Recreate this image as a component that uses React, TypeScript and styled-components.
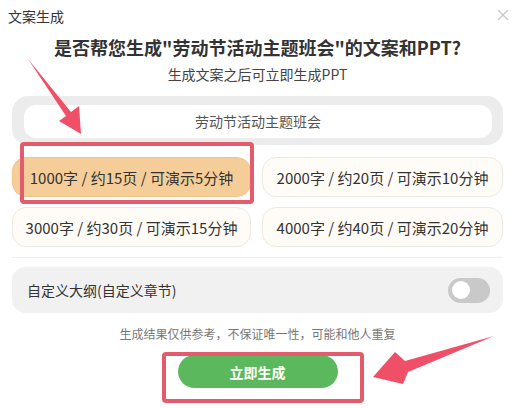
import * as React from 'react';
import styled, { createGlobalStyle } from 'styled-components';

const GlobalStyle = createGlobalStyle`
    html, body {
        margin: 0;
        padding: 0;
        background: #ffffff;
    }
    * {
        box-sizing: border-box;
    }
`;

const Dialog = styled.div`
    position: relative;
    width: 523px;
    height: 408px;
    padding: 0 20px 0 12px;
    background: #ffffff;
    font-family: 'Noto Sans CJK SC', 'Noto Sans', sans-serif;
    color: #333333;
    overflow: hidden;
`;

const Header = styled.div`
    display: flex;
    justify-content: space-between;
    align-items: center;
    height: 32px;
    margin: 0 -7px 0 -4px;
    font-size: 14px;
    color: #333333;
`;

const CloseButton = styled.button`
    width: 14px;
    height: 14px;
    padding: 0;
    border: none;
    background: none;
    display: flex;
    align-items: center;
    justify-content: center;
    margin-top: -2px;
    cursor: pointer;
`;

const Heading = styled.h1`
    margin: 0;
    height: 30px;
    line-height: 30px;
    text-align: center;
    font-size: 18px;
    font-weight: bold;
    color: #333333;
`;

const SubTitle = styled.p`
    margin: 1px 0 0;
    line-height: 22px;
    text-align: center;
    font-size: 14px;
    color: #444444;
`;

const TopicBox = styled.div`
    margin-top: 11px;
    height: 49px;
    padding: 9px 11px 7px 12px;
    background: #ececec;
    border-radius: 16px;
`;

const TopicInput = styled.div`
    height: 33px;
    line-height: 33px;
    background: #ffffff;
    border-radius: 12px;
    text-align: center;
    font-size: 14px;
    color: #555555;
`;

const OptionGrid = styled.div`
    margin-top: 12px;
    display: grid;
    grid-template-columns: 239px 241px;
    column-gap: 11px;
    row-gap: 10px;
`;

const Option = styled.div<{ $active?: boolean }>`
    height: 40px;
    display: flex;
    align-items: center;
    justify-content: center;
    border-radius: 14px;
    font-size: 15px;
    color: #333333;
    background: ${(p) => (p.$active ? '#f5cd98' : '#fffbf6')};
    border: 1px solid ${(p) => (p.$active ? '#f0c587' : '#efe9e2')};
`;

const Divider = styled.div`
    margin-top: 10px;
    height: 1px;
    background: #efefef;
`;

const CustomRow = styled.div`
    margin-top: 9px;
    height: 46px;
    padding: 0 13px 0 15px;
    display: flex;
    align-items: center;
    justify-content: space-between;
    background: #f1f1f1;
    border-radius: 14px;
    font-size: 14px;
    color: #333333;
`;

const Toggle = styled.div`
    width: 42px;
    height: 25px;
    border-radius: 13px;
    background: #c9c9c9;
    display: flex;
    align-items: center;
    padding-left: 4px;
`;

const Knob = styled.div`
    width: 18px;
    height: 18px;
    border-radius: 50%;
    background: #ffffff;
`;

const Note = styled.p`
    margin: 12px 0 0;
    line-height: 18px;
    text-align: center;
    font-size: 12px;
    color: #777777;
`;

const ButtonRow = styled.div`
    margin-top: 12px;
    display: flex;
    justify-content: center;
`;

const GenerateButton = styled.button`
    width: 160px;
    height: 33px;
    border: none;
    border-radius: 17px;
    background: #5cb85c;
    color: #ffffff;
    font-family: inherit;
    font-size: 14px;
    font-weight: bold;
    cursor: pointer;
`;

const Overlay = styled.svg`
    position: absolute;
    left: 0;
    top: 0;
    pointer-events: none;
`;

const options = [
    '1000字 / 约15页 / 可演示5分钟',
    '2000字 / 约20页 / 可演示10分钟',
    '3000字 / 约30页 / 可演示15分钟',
    '4000字 / 约40页 / 可演示20分钟',
];

const App = () => (
    <Dialog>
        <GlobalStyle />
        <Header>
            <span>文案生成</span>
            <CloseButton aria-label="关闭">
                <svg width="12" height="12" viewBox="0 0 12 12">
                    <path d="M1 1L11 11M11 1L1 11" stroke="#c8c8c8" strokeWidth="1.4" />
                </svg>
            </CloseButton>
        </Header>
        <Heading>是否帮您生成"劳动节活动主题班会"的文案和PPT?</Heading>
        <SubTitle>生成文案之后可立即生成PPT</SubTitle>
        <TopicBox>
            <TopicInput>劳动节活动主题班会</TopicInput>
        </TopicBox>
        <OptionGrid>
            {options.map((label, i) => (
                <Option key={label} $active={i === 0}>
                    {label}
                </Option>
            ))}
        </OptionGrid>
        <Divider />
        <CustomRow>
            <span>自定义大纲(自定义章节)</span>
            <Toggle>
                <Knob />
            </Toggle>
        </CustomRow>
        <Note>生成结果仅供参考，不保证唯一性，可能和他人重复</Note>
        <ButtonRow>
            <GenerateButton>立即生成</GenerateButton>
        </ButtonRow>

        {/* annotation marks drawn over the dialog */}
        <Overlay width="523" height="408" viewBox="0 0 523 408">
            <rect x="22" y="144" width="230" height="58" rx="2" fill="none" stroke="#e35b6c" strokeWidth="4" />
            <rect x="164" y="354" width="198" height="47" rx="2" fill="none" stroke="#e35b6c" strokeWidth="4" />
            <polygon points="28,59 71,112 79,106 81,134 59,121 66,116" fill="#ef5068" />
            <polygon points="494,336 405,361 395,352 373,377 403,384 408,372" fill="#ef5068" />
        </Overlay>
    </Dialog>
);

export default App;
